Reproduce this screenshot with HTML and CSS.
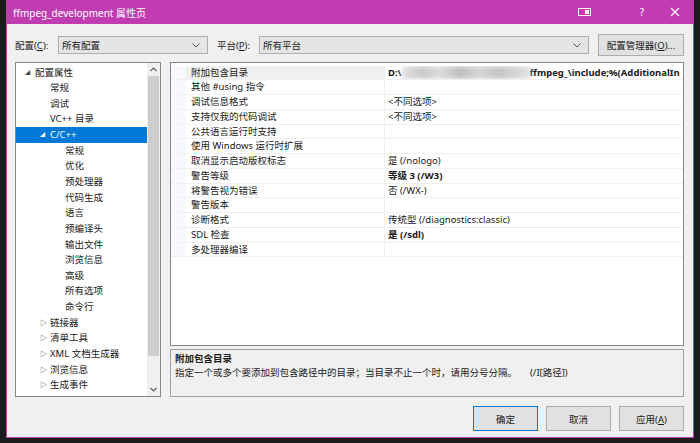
FILE: index.html
```html
<!DOCTYPE html>
<html lang="zh-CN">

<head>
    <meta charset="UTF-8">
    <title>ffmpeg_development 属性页</title>
    <link rel="stylesheet" href="styles.css">
</head>

<body>
    <div class="screen">
        <div class="dialog">
            <div class="titlebar">
                <span class="title">ffmpeg_development 属性页</span>
                <div class="title-tools">
                    <svg class="ico-snap" width="13" height="8" viewBox="0 0 13 8">
                        <rect x="0.5" y="0.5" width="12" height="7" fill="none" stroke="#fff" stroke-width="1"/>
                        <rect x="7" y="2" width="4" height="4" fill="#fff"/>
                    </svg>
                    <span class="ico-help">?</span>
                    <svg class="ico-close" width="10" height="10" viewBox="0 0 10 10">
                        <path d="M1 1 L9 9 M9 1 L1 9" stroke="#fff" stroke-width="1.1"/>
                    </svg>
                </div>
            </div>

            <div class="content">
                <div class="toolbar">
                    <label class="tb-label">配置(<u>C</u>):</label>
                    <div class="combo combo-config">
                        <span>所有配置</span>
                        <svg width="8" height="5" viewBox="0 0 8 5"><path d="M0.5 0.5 L4 4 L7.5 0.5" fill="none" stroke="#555" stroke-width="1"/></svg>
                    </div>
                    <label class="tb-label tb-label-platform">平台(<u>P</u>):</label>
                    <div class="combo combo-platform">
                        <span>所有平台</span>
                        <svg width="8" height="5" viewBox="0 0 8 5"><path d="M0.5 0.5 L4 4 L7.5 0.5" fill="none" stroke="#555" stroke-width="1"/></svg>
                    </div>
                    <button class="btn btn-manager">配置管理器(<u>O</u>)...</button>
                </div>

                <div class="main">
                    <div class="tree">
                        <ul class="tree-list">
                            <li class="lv0"><span class="arrow open">◢</span>配置属性</li>
                            <li class="lv1">常规</li>
                            <li class="lv1">调试</li>
                            <li class="lv1">VC++ 目录</li>
                            <li class="lv1 selected"><span class="arrow open">◢</span>C/C++</li>
                            <li class="lv2">常规</li>
                            <li class="lv2">优化</li>
                            <li class="lv2">预处理器</li>
                            <li class="lv2">代码生成</li>
                            <li class="lv2">语言</li>
                            <li class="lv2">预编译头</li>
                            <li class="lv2">输出文件</li>
                            <li class="lv2">浏览信息</li>
                            <li class="lv2">高级</li>
                            <li class="lv2">所有选项</li>
                            <li class="lv2">命令行</li>
                            <li class="lv1"><span class="arrow">▷</span>链接器</li>
                            <li class="lv1"><span class="arrow">▷</span>清单工具</li>
                            <li class="lv1"><span class="arrow">▷</span>XML 文档生成器</li>
                            <li class="lv1"><span class="arrow">▷</span>浏览信息</li>
                            <li class="lv1"><span class="arrow">▷</span>生成事件</li>
                        </ul>
                        <div class="scrollbar">
                            <svg class="sb-arrow" width="7" height="5" viewBox="0 0 7 5"><path d="M0.5 4 L3.5 1 L6.5 4" fill="none" stroke="#606060" stroke-width="1.2"/></svg>
                            <div class="sb-track"><div class="sb-thumb"></div></div>
                            <svg class="sb-arrow" width="7" height="5" viewBox="0 0 7 5"><path d="M0.5 1 L3.5 4 L6.5 1" fill="none" stroke="#606060" stroke-width="1.2"/></svg>
                        </div>
                    </div>

                    <div class="right">
                        <div class="grid">
                            <div class="row current">
                                <div class="gutter"></div>
                                <div class="name">附加包含目录</div>
                                <div class="value bold">D:\<span class="redact"></span>ffmpeg_\include;%(AdditionalIn</div>
                            </div>
                            <div class="row"><div class="gutter"></div><div class="name">其他 #using 指令</div><div class="value"></div></div>
                            <div class="row"><div class="gutter"></div><div class="name">调试信息格式</div><div class="value">&lt;不同选项&gt;</div></div>
                            <div class="row"><div class="gutter"></div><div class="name">支持仅我的代码调试</div><div class="value">&lt;不同选项&gt;</div></div>
                            <div class="row"><div class="gutter"></div><div class="name">公共语言运行时支持</div><div class="value"></div></div>
                            <div class="row"><div class="gutter"></div><div class="name">使用 Windows 运行时扩展</div><div class="value"></div></div>
                            <div class="row"><div class="gutter"></div><div class="name">取消显示启动版权标志</div><div class="value">是 (/nologo)</div></div>
                            <div class="row"><div class="gutter"></div><div class="name">警告等级</div><div class="value bold">等级 3 (/W3)</div></div>
                            <div class="row"><div class="gutter"></div><div class="name">将警告视为错误</div><div class="value">否 (/WX-)</div></div>
                            <div class="row"><div class="gutter"></div><div class="name">警告版本</div><div class="value"></div></div>
                            <div class="row"><div class="gutter"></div><div class="name">诊断格式</div><div class="value">传统型 (/diagnostics:classic)</div></div>
                            <div class="row"><div class="gutter"></div><div class="name">SDL 检查</div><div class="value bold">是 (/sdl)</div></div>
                            <div class="row"><div class="gutter"></div><div class="name">多处理器编译</div><div class="value"></div></div>
                        </div>
                        <div class="desc">
                            <div class="desc-title">附加包含目录</div>
                            <div class="desc-text">指定一个或多个要添加到包含路径中的目录；当目录不止一个时，请用分号分隔。<span class="desc-switch">(/I[路径])</span></div>
                        </div>
                    </div>
                </div>

                <div class="actions">
                    <button class="btn btn-ok">确定</button>
                    <button class="btn">取消</button>
                    <button class="btn">应用(<u>A</u>)</button>
                </div>
            </div>
        </div>
    </div>
</body>

</html>
```

FILE: styles.css
```css
body {
    margin: 0;
    padding: 0;
    background-color: #1c1c1c;
    font-family: 'Noto Sans', 'Noto Sans CJK SC', sans-serif;
    font-size: 9.5px;
    color: #1a1a1a;
}

.screen {
    width: 700px;
    height: 443px;
    padding-left: 6px;
    box-sizing: border-box;
    overflow: hidden;
}

.dialog {
    width: 688px;
    height: 438px;
    box-sizing: border-box;
    border: 1px solid #c13cb0;
    border-top: none;
    background-color: #f0f0f0;
    display: flex;
    flex-direction: column;
}

.titlebar {
    height: 24px;
    flex: 0 0 24px;
    background-color: #c13cb0;
    color: #fff;
    display: flex;
    align-items: center;
    padding-left: 6px;
}

.title {
    font-size: 10px;
    flex: 1;
}

.title-tools {
    display: flex;
    align-items: center;
}

.ico-snap {
    margin-right: 49px;
}

.ico-help {
    font-size: 10px;
    margin-right: 26px;
}

.ico-close {
    margin-right: 13px;
}

.content {
    flex: 1;
    padding: 10px 9px 6px 8px;
    display: flex;
    flex-direction: column;
    gap: 6px;
}

u {
    text-decoration: underline;
    text-underline-offset: 1px;
}

/* toolbar */
.toolbar {
    height: 22px;
    display: flex;
    align-items: center;
}

.tb-label {
    width: 43px;
}

.tb-label-platform {
    width: 42px;
    margin-left: 9px;
}

.combo {
    height: 18px;
    box-sizing: border-box;
    border: 1px solid #adadad;
    background-color: #e5e5e5;
    display: flex;
    align-items: center;
    justify-content: space-between;
    padding: 0 7px 0 3px;
}

.combo-config {
    width: 150px;
}

.combo-platform {
    width: 330px;
}

.btn {
    font-family: inherit;
    font-size: 9.5px;
    color: #1a1a1a;
    background-color: #e1e1e1;
    border: 1px solid #adadad;
    padding: 0;
    box-sizing: border-box;
}

.btn-manager {
    width: 86px;
    height: 22px;
    margin-left: auto;
}

/* main area */
.main {
    height: 335px;
    display: flex;
    gap: 9px;
}

.tree {
    width: 146px;
    height: 335px;
    box-sizing: border-box;
    border: 1px solid #828790;
    background-color: #fff;
    display: flex;
}

.tree-list {
    list-style: none;
    margin: 0;
    padding: 1.5px 0 0 0;
    flex: 1;
}

.tree-list li {
    height: 15.65px;
    line-height: 15.65px;
    white-space: nowrap;
}

.lv0 {
    padding-left: 19px;
}

.lv1 {
    padding-left: 34px;
}

.lv2 {
    padding-left: 49px;
}

.arrow {
    display: inline-block;
    width: 10px;
    margin-left: -10px;
    font-size: 7px;
    color: #333;
    vertical-align: top;
}

.arrow.open {
    font-size: 5px;
    color: #444;
}

.tree-list li.selected {
    background-color: #0078d7;
    color: #fff;
}

.tree-list li.selected .arrow {
    color: #fff;
}

.scrollbar {
    width: 13px;
    background-color: #f0f0f0;
    display: flex;
    flex-direction: column;
    align-items: center;
}

.sb-arrow {
    margin: 4px 0;
}

.sb-track {
    flex: 1;
    width: 100%;
    display: flex;
    flex-direction: column;
}

.sb-thumb {
    height: 280px;
    margin: 0 1px;
    background-color: #cdcdcd;
}

/* property grid */
.right {
    width: 514px;
    display: flex;
    flex-direction: column;
    gap: 3px;
}

.grid {
    height: 284px;
    box-sizing: border-box;
    border: 1px solid #828790;
    background-color: #fff;
    padding-top: 2.5px;
}

.row {
    height: 14.75px;
    line-height: 13.75px;
    display: flex;
    box-sizing: border-box;
    border-bottom: 1px solid #f0f0f0;
}

.gutter {
    width: 15px;
    flex: 0 0 15px;
    background-color: #f7f9fc;
}

.name {
    width: 199px;
    flex: 0 0 199px;
    box-sizing: border-box;
    padding-left: 5px;
    border-right: 1px solid #f0f0f0;
    white-space: nowrap;
}

.row.current .name {
    background-color: #f0f0f0;
}

.value {
    flex: 1;
    padding-left: 3px;
    white-space: nowrap;
    overflow: hidden;
}

.bold {
    font-weight: bold;
}

.redact {
    display: inline-block;
    width: 128px;
    height: 13px;
    vertical-align: middle;
    background: linear-gradient(90deg, #e4e4e4 0%, #c9c9c9 15%, #dcdcdc 30%, #bdbdbd 45%, #d6d6d6 60%, #c4c4c4 75%, #e2e2e2 100%);
    filter: blur(2px);
}

/* description */
.desc {
    height: 48px;
    box-sizing: border-box;
    border: 1px solid #a0a0a0;
    background-color: #f0f0f0;
    padding: 2px 4px;
    line-height: 14px;
}

.desc-title {
    font-weight: bold;
}

.desc-switch {
    margin-left: 13px;
}

/* dialog buttons */
.actions {
    height: 25px;
    display: flex;
    justify-content: flex-end;
    gap: 8px;
    margin-top: 3px;
}

.actions .btn {
    width: 65px;
    height: 25px;
}

.btn-ok {
    border-color: #0078d7;
}
```
